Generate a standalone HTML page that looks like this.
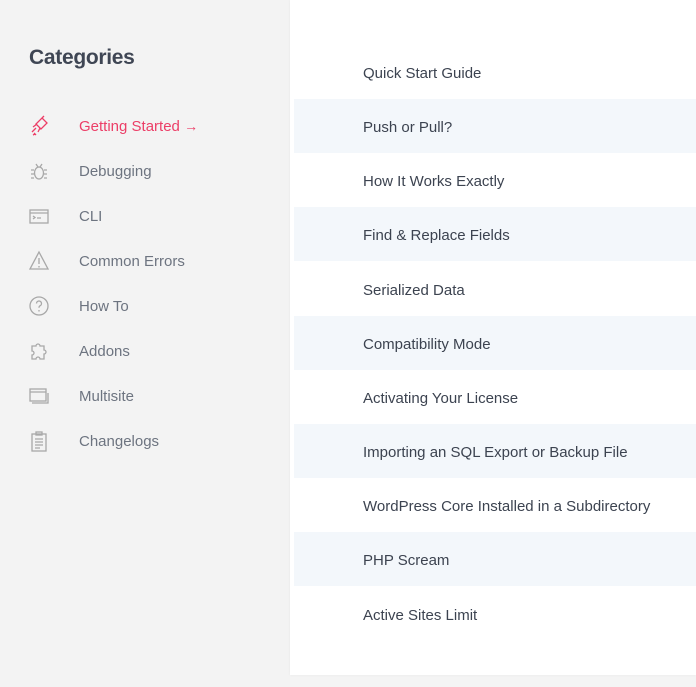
<!DOCTYPE html>
<html><head><style>
*{margin:0;padding:0;box-sizing:border-box}
body{width:696px;height:687px;background:#f4f4f4;font-family:"Liberation Sans",sans-serif;position:relative;overflow:hidden}
.side{position:absolute;left:0;top:0;width:290px;height:687px;background:#f3f3f3}
h2{position:absolute;left:29px;top:46px;font-size:21px;font-weight:bold;color:#3f4654;letter-spacing:-0.3px}
.it{position:absolute;left:0;height:24px;width:290px}
.it svg{position:absolute;left:28px;top:2px}
.it span{position:absolute;left:79px;top:5px;font-size:15px;color:#6d7480}
.it.a span{color:#ec3e67}
.panel{position:absolute;left:290px;top:0;width:406px;height:675px;background:#fff;box-shadow:0 0 3px rgba(0,0,0,0.05)}
.row{position:absolute;left:4px;width:402px;height:54px;font-size:15px;color:#3c4350;padding-left:69px;line-height:58px}
.row.s{background:#f3f7fb}
</style></head><body>
<div class="side">
<h2>Categories</h2>
<div class="it a" style="top:113px"><svg width="22" height="22" viewBox="0 0 22 22" fill="none" stroke="#ec3e67" stroke-width="1.3"><path d="M14 3l5 5-6 6-5-5z M9 9l-4 3 M12 13l-2 4 M4 17l4-4 M14 3l2-2 M6 18l2 2 M7 19l-2 1"/></svg><span>Getting Started <span style="position:static;font-size:14px">→</span></span></div>
<div class="it" style="top:158px"><svg width="22" height="22" viewBox="0 0 22 22" fill="none" stroke="#a8a8a8" stroke-width="1.3"><ellipse cx="11" cy="13" rx="4.5" ry="6"/><path d="M8 4l2 3 M14 4l-2 3 M3 10h3 M16 10h3 M3 14h3 M16 14h3 M3 18h3 M16 18h3"/></svg><span>Debugging</span></div>
<div class="it" style="top:203px"><svg width="22" height="22" viewBox="0 0 22 22" fill="none" stroke="#a8a8a8" stroke-width="1.3"><rect x="2" y="5" width="18" height="13"/><path d="M2 8h18 M5 11l2 1.5-2 1.5 M9 13h4"/></svg><span>CLI</span></div>
<div class="it" style="top:248px"><svg width="22" height="22" viewBox="0 0 22 22" fill="none" stroke="#a8a8a8" stroke-width="1.3"><path d="M11 2l9 17H2z M11 8v6 M11 16v1.5"/></svg><span>Common Errors</span></div>
<div class="it" style="top:293px"><svg width="22" height="22" viewBox="0 0 22 22" fill="none" stroke="#a8a8a8" stroke-width="1.3"><circle cx="11" cy="11" r="9"/><path d="M8.5 8.5a2.5 2.5 0 1 1 3.5 2.3c-.8.4-1 1-1 2 M11 15v1.5"/></svg><span>How To</span></div>
<div class="it" style="top:338px"><svg width="22" height="22" viewBox="0 0 22 22" fill="none" stroke="#a8a8a8" stroke-width="1.3"><path d="M4 6h4a2 2 0 1 1 4 0h4v4a2 2 0 1 1 0 4v5h-4a2 2 0 1 0-4 0H4v-4a2 2 0 1 0 0-4z"/></svg><span>Addons</span></div>
<div class="it" style="top:383px"><svg width="22" height="22" viewBox="0 0 22 22" fill="none" stroke="#a8a8a8" stroke-width="1.3"><rect x="2" y="4" width="16" height="12"/><path d="M2 7h16 M4 18h16V8"/></svg><span>Multisite</span></div>
<div class="it" style="top:428px"><svg width="22" height="22" viewBox="0 0 22 22" fill="none" stroke="#a8a8a8" stroke-width="1.3"><rect x="4" y="4" width="14" height="17"/><rect x="8" y="2" width="6" height="3"/><path d="M7 9h8 M7 12h8 M7 15h8 M7 18h5"/></svg><span>Changelogs</span></div>
</div>
<div class="panel">
<div class="row" style="top:45px">Quick Start Guide</div>
<div class="row s" style="top:99px">Push or Pull?</div>
<div class="row" style="top:153px">How It Works Exactly</div>
<div class="row s" style="top:207px">Find &amp; Replace Fields</div>
<div class="row" style="top:262px">Serialized Data</div>
<div class="row s" style="top:316px">Compatibility Mode</div>
<div class="row" style="top:370px">Activating Your License</div>
<div class="row s" style="top:424px">Importing an SQL Export or Backup File</div>
<div class="row" style="top:478px">WordPress Core Installed in a Subdirectory</div>
<div class="row s" style="top:532px">PHP Scream</div>
<div class="row" style="top:587px">Active Sites Limit</div>
</div>
</body></html>
